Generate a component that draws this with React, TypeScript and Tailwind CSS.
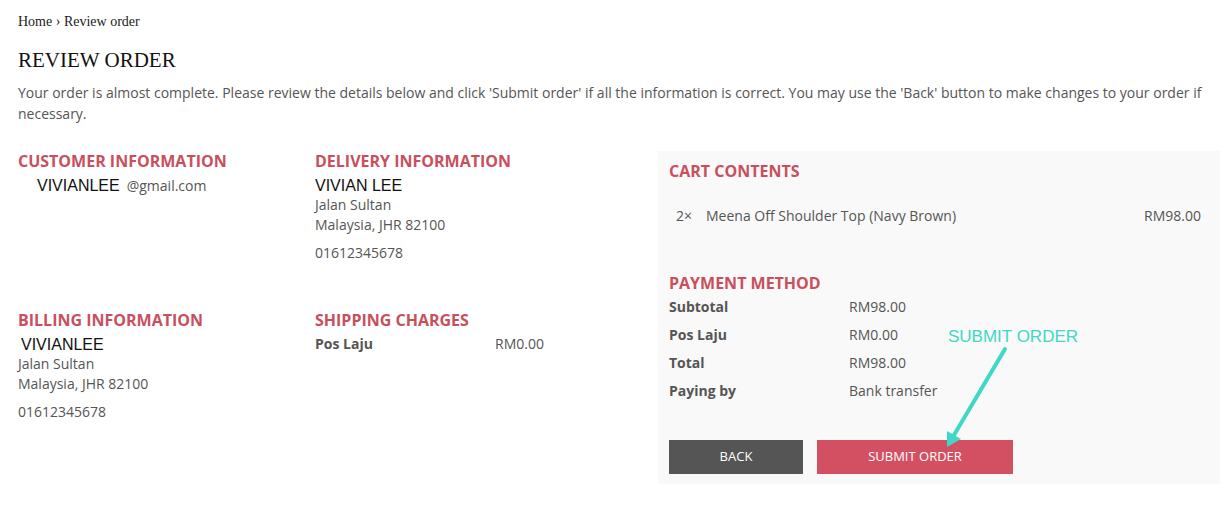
export default function App() {
  const heading = "font-['Open_Sans',sans-serif] text-[16px] font-bold leading-[22px] text-[#c8505d]";
  const body = "font-['Open_Sans',sans-serif] text-[14px] leading-[20px] text-[#555]";
  const name = "font-['Liberation_Sans',Arial,sans-serif] text-[16px] leading-[18px] text-[#111]";

  return (
    <div className="min-h-[507px] bg-white pl-[18px] pr-[10px] pt-[12px]">
      {/* Breadcrumb */}
      <div className="font-['Liberation_Serif',serif] text-[14px] leading-[20px] text-[#222]">
        Home › Review order
      </div>

      <h1 className="mt-[14px] font-['Liberation_Serif',serif] text-[21px] leading-[28px] text-[#111]">
        REVIEW ORDER
      </h1>

      <p className="mt-[8px] font-['Open_Sans',sans-serif] text-[14px] leading-[21px] text-[#555]">
        Your order is almost complete. Please review the details below and click 'Submit order' if all the information is correct. You may use the 'Back' button to make changes to your order if necessary.
      </p>

      <div className="mt-[26px] flex">
        {/* Left side - customer, delivery, billing, shipping */}
        <div className="w-[640px] shrink-0">
          <div className="grid h-[159px] grid-cols-[297px_1fr]">
            <div>
              <div className={heading}>CUSTOMER INFORMATION</div>
              <div className="mt-[2px] flex items-baseline pl-[19px]">
                <span className="font-['Liberation_Sans',Arial,sans-serif] text-[16px] text-[#111]">VIVIANLEE</span>
                <span className={body + " ml-[7px]"}>@gmail.com</span>
              </div>
            </div>
            <div>
              <div className={heading}>DELIVERY INFORMATION</div>
              <div className={name + " mt-[5px]"}>VIVIAN LEE</div>
              <div className={body}>Jalan Sultan</div>
              <div className={body}>Malaysia, JHR 82100</div>
              <div className={body + " mt-[8px]"}>01612345678</div>
            </div>
          </div>

          <div className="grid grid-cols-[297px_1fr]">
            <div>
              <div className={heading}>BILLING INFORMATION</div>
              <div className={name + " mt-[5px] pl-[3px]"}>VIVIANLEE</div>
              <div className={body}>Jalan Sultan</div>
              <div className={body}>Malaysia, JHR 82100</div>
              <div className={body + " mt-[8px]"}>01612345678</div>
            </div>
            <div>
              <div className={heading}>SHIPPING CHARGES</div>
              <div className="mt-[3px] flex">
                <span className={body + " w-[180px] font-bold"}>Pos Laju</span>
                <span className={body}>RM0.00</span>
              </div>
            </div>
          </div>
        </div>

        {/* Right side - cart panel */}
        <div className="relative mt-px flex-1 bg-[#f9f9f9] pb-[10px] pl-[11px] pr-[19px] pt-[9px]">
          <div className={heading}>CART CONTENTS</div>
          <div className="mt-[24px] flex items-center">
            <span className={body + " w-[37px] pl-[7px]"}>2×</span>
            <span className={body + " flex-1"}>Meena Off Shoulder Top (Navy Brown)</span>
            <span className={body}>RM98.00</span>
          </div>

          <div className={heading + " mt-[46px]"}>PAYMENT METHOD</div>
          <div className="-mt-px">
            {[
              ["Subtotal", "RM98.00"],
              ["Pos Laju", "RM0.00"],
              ["Total", "RM98.00"],
              ["Paying by", "Bank transfer"],
            ].map(([label, value]) => (
              <div key={label} className="flex h-[28px] items-center">
                <span className={body + " w-[180px] font-bold"}>{label}</span>
                <span className={body}>{value}</span>
              </div>
            ))}
          </div>

          <div className="mt-[35px] flex gap-[14px]">
            <button className="h-[34px] w-[134px] bg-[#555] font-['Open_Sans',sans-serif] text-[13px] text-white">
              BACK
            </button>
            <button className="h-[34px] w-[196px] bg-[#d35062] font-['Open_Sans',sans-serif] text-[13px] text-white">
              SUBMIT ORDER
            </button>
          </div>

          {/* Annotation */}
          <div className="absolute left-[290px] top-[176px] font-['Liberation_Sans',Arial,sans-serif] text-[17px] leading-[20px] text-[#3fd8c6]">
            SUBMIT ORDER
          </div>
          <svg
            className="absolute left-[280px] top-[190px]"
            width="80"
            height="115"
            viewBox="0 0 80 115"
          >
            <line x1="67" y1="8" x2="16" y2="94" stroke="#3fd8c6" strokeWidth="4" strokeLinecap="round" />
            <polygon points="9,106 23,98 9,90" fill="#3fd8c6" />
          </svg>
        </div>
      </div>
    </div>
  );
}
